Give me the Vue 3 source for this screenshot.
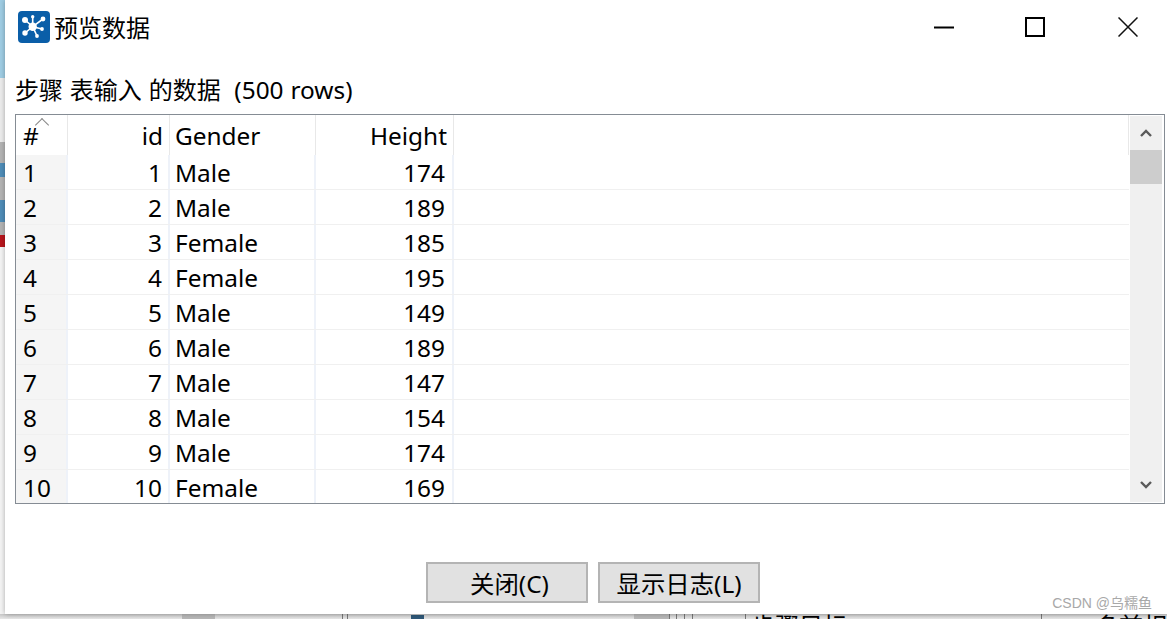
<script setup>
const rows = [
  [1, 1, 'Male', 174],
  [2, 2, 'Male', 189],
  [3, 3, 'Female', 185],
  [4, 4, 'Female', 195],
  [5, 5, 'Male', 149],
  [6, 6, 'Male', 189],
  [7, 7, 'Male', 147],
  [8, 8, 'Male', 154],
  [9, 9, 'Male', 174],
  [10, 10, 'Female', 169]
]
// 窗口下方露出的背景竖线
const lines = [182, 342, 347, 669, 676, 684, 692, 745, 1041]
</script>

<template>
  <div class="desktop">
    <div class="edge">
      <div class="edge-sky"></div>
      <div class="edge-light"></div>
      <div class="edge-gray">
        <div class="blue b1"></div>
        <div class="blue b2"></div>
      </div>
      <div class="edge-red"></div>
      <div class="edge-dots"></div>
    </div>
    <div class="dialog">
      <div class="titlebar">
        <svg class="logo" width="32" height="32" viewBox="0 0 32 32">
          <rect width="32" height="32" rx="4" fill="#0a5ea8" />
          <path d="M14.7 15.7L7 9M14.7 15.7L14.7 5.7M14.7 15.7L25 8M14.7 15.7L24 18M14.7 15.7L19 25M14.7 15.7L7 22" stroke="#fff" stroke-width="1.6" fill="none" />
          <g fill="#fff">
            <circle cx="14.7" cy="15.7" r="4.2" />
            <circle cx="7" cy="9" r="3" />
            <circle cx="14.7" cy="5.7" r="1.7" />
            <circle cx="25" cy="8" r="2.4" />
            <circle cx="24" cy="18" r="1.9" />
            <circle cx="19" cy="25" r="1.9" />
            <circle cx="7" cy="22" r="2.7" />
          </g>
        </svg>
        <span class="title">预览数据</span>
        <div class="win-btns">
          <svg width="20" height="20" viewBox="0 0 20 20"><path d="M0 10.5H20" stroke="#000" stroke-width="2" /></svg>
          <svg width="20" height="20" viewBox="0 0 20 20"><rect x="1" y="1" width="18" height="18" fill="none" stroke="#000" stroke-width="2" /></svg>
          <svg class="win-close" width="20" height="20" viewBox="0 0 20 20"><path d="M0.5 0.5L19.5 19.5M19.5 0.5L0.5 19.5" stroke="#111" stroke-width="1.5" /></svg>
        </div>
      </div>

      <div class="caption">步骤 表输入 的数据&nbsp; <span class="latin">(500 rows)</span></div>

      <div class="grid-box">
        <div class="grid">
          <div class="row head">
            <div class="c c-num">#<span class="sort"></span></div>
            <div class="c c-id right">id</div>
            <div class="c c-gender">Gender</div>
            <div class="c c-height right">Height</div>
            <div class="c c-rest"></div>
          </div>
          <div v-for="r in rows" :key="r[0]" class="row">
            <div class="c c-num">{{ r[0] }}</div>
            <div class="c c-id right">{{ r[1] }}</div>
            <div class="c c-gender">{{ r[2] }}</div>
            <div class="c c-height right">{{ r[3] }}</div>
            <div class="c c-rest"></div>
          </div>
        </div>
        <div class="scrollbar">
          <svg class="arrow" width="12" height="8" viewBox="0 0 12 8"><path d="M1 7L6 2L11 7" fill="none" stroke="#5a5a5a" stroke-width="2.4" /></svg>
          <div class="thumb"></div>
          <div class="track"></div>
          <svg class="arrow" width="12" height="8" viewBox="0 0 12 8"><path d="M1 1L6 6L11 1" fill="none" stroke="#5a5a5a" stroke-width="2.4" /></svg>
        </div>
      </div>

      <div class="actions">
        <button class="btn btn-close">关闭(C)</button>
        <button class="btn">显示日志(L)</button>
      </div>
      <div class="watermark">CSDN @乌糯鱼</div>
    </div>
    <div class="under">
      <i v-for="x in lines" :key="x" class="vline" :style="{ left: x + 'px' }"></i>
      <i class="patch p1"></i>
      <i class="patch p2"></i>
      <i class="block"></i>
      <span class="bg-text t1">步骤目标</span>
      <span class="bg-text t2">多前相</span>
    </div>
  </div>
</template>

<style scoped>
.desktop {
  width: 1167px;
  height: 619px;
  display: flex;
  flex-wrap: wrap;
  overflow: hidden;
  background: #fff;
  font-family: "Noto Sans", "Noto Sans CJK SC", sans-serif;
  color: #000;
}
.edge {
  width: 5px;
  height: 614px;
  display: flex;
  flex-direction: column;
}
.edge-sky {
  height: 78px;
  background: #9fcde4;
}
.edge-light {
  height: 64px;
  background: #ececec;
}
.edge-gray {
  height: 93px;
  background: #b4b4b4;
  display: flex;
  flex-direction: column;
}
.blue {
  background: #4f8db8;
}
.b1 {
  height: 14px;
  margin-top: 21px;
}
.b2 {
  height: 22px;
  margin-top: 23px;
}
.edge-red {
  height: 12px;
  background: #b8161c;
}
.edge-dots {
  flex: 1;
  background: #f4f4f4;
}
.dialog {
  position: relative;
  z-index: 1;
  width: 1162px;
  height: 614px;
  background: #fff;
  box-sizing: border-box;
  display: flex;
  flex-direction: column;
  box-shadow: 0 0 5px rgba(0, 0, 0, 0.3);
}
.under {
  position: relative;
  width: 100%;
  height: 5px;
  overflow: hidden;
  background: linear-gradient(#c8c8c8, #e8e8e8);
}
.vline {
  position: absolute;
  top: 0;
  width: 1px;
  height: 5px;
  background: #777;
}
.patch {
  position: absolute;
  top: 0;
  height: 5px;
  background: #b8b8b8;
}
.p1 {
  left: 182px;
  width: 33px;
}
.p2 {
  left: 634px;
  width: 35px;
}
.block {
  position: absolute;
  left: 411px;
  top: 1px;
  width: 13px;
  height: 4px;
  background: #2f5878;
}
.bg-text {
  position: absolute;
  top: -3px;
  font-size: 24px;
  line-height: 30px;
  white-space: nowrap;
}
.t1 {
  left: 751px;
}
.t2 {
  left: 1095px;
}
.titlebar {
  height: 54px;
  display: flex;
  align-items: center;
  padding-left: 13px;
  flex-shrink: 0;
}
.logo {
  flex-shrink: 0;
}
.title {
  margin-left: 4px;
  margin-top: 2px;
  font-size: 24px;
  line-height: 32px;
}
.win-btns {
  margin-left: auto;
  padding-right: 29px;
  display: flex;
  gap: 71px;
}
.win-close {
  margin-left: 2px;
}
.caption {
  margin-left: 10px;
  margin-top: 20px;
  height: 40px;
  font-size: 24px;
  line-height: 32px;
  white-space: nowrap;
  word-spacing: 0.6px;
}
.latin {
  font-size: 24.4px;
}
.grid-box {
  margin-left: 10px;
  width: 1150px;
  height: 390px;
  box-sizing: border-box;
  border: 1px solid #858c94;
  display: flex;
  overflow: hidden;
}
.grid {
  flex: 1;
}
.row {
  display: flex;
  height: 35px;
  font-size: 24.4px;
  line-height: 35px;
  box-sizing: border-box;
  border-bottom: 1px solid #f0f0f0;
}
.row.head {
  height: 40px;
  line-height: 41px;
  border-bottom: none;
}
.c {
  box-sizing: border-box;
  white-space: nowrap;
  border-right: 2px solid #eef2f9;
  padding: 0 6px 0 7px;
}
.head .c {
  border-right: 1px solid #e8e8e8;
}
.c-num {
  position: relative;
  width: 52px;
  background: #f5f5f5;
}
.head .c-num {
  background: #fff;
}
.c-id {
  width: 102px;
}
.c-gender {
  width: 146px;
  padding-left: 5px;
}
.c-height {
  width: 138px;
  padding-right: 7px;
}
.head .c-height {
  padding-right: 6px;
}
.c-rest {
  flex: 1;
  border-right: none;
}
.right {
  text-align: right;
}
.sort {
  position: absolute;
  left: 21px;
  top: 5px;
  width: 9px;
  height: 9px;
  border-left: 1px solid #888;
  border-top: 1px solid #888;
  transform: rotate(45deg);
}
.scrollbar {
  width: 32px;
  margin: 1px 2px 1px 1px;
  background: #f0f0f0;
  display: flex;
  flex-direction: column;
  align-items: center;
}
.arrow {
  flex-shrink: 0;
  margin: 13px 0;
}
.thumb {
  width: 100%;
  height: 34px;
  background: #cdcdcd;
  flex-shrink: 0;
}
.track {
  flex: 1;
}
.actions {
  position: absolute;
  left: 421px;
  top: 562px;
  display: flex;
  gap: 10px;
}
.btn {
  width: 162px;
  height: 41px;
  padding: 0;
  box-sizing: border-box;
  background: #e1e1e1;
  border: 2px solid #b4b4b4;
  font-family: inherit;
  font-size: 24.4px;
  color: #000;
}
.btn-close {
  padding-left: 5px;
}
.watermark {
  position: absolute;
  right: 15px;
  bottom: 2px;
  font-family: "Liberation Sans", "Noto Sans CJK SC", sans-serif;
  font-size: 14px;
  color: #a8a8a8;
}
</style>
